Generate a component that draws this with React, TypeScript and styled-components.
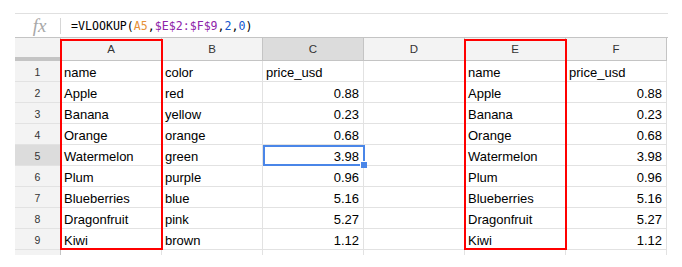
import React from 'react';
import styled, { createGlobalStyle } from 'styled-components';

const Global = createGlobalStyle`
  html, body { margin: 0; padding: 0; background: #fff; }
  body { font-family: "Liberation Sans", Arial, sans-serif; }
`;

const Page = styled.div`
  padding: 13px 0 0 15px;
  width: 653px;
`;

const FormulaBar = styled.div`
  display: flex;
  align-items: center;
  height: 23px;
  border-top: 1px solid #e0e0e0;
`;

const FxBox = styled.div`
  width: 46px;
  height: 16px;
  display: flex;
  align-items: center;
  justify-content: center;
  border-right: 1px solid #d6d6d6;
  font-family: "Liberation Serif", "Times New Roman", serif;
  font-style: italic;
  font-size: 19px;
  color: #a8a8a8;
  line-height: 16px;
  padding-left: 4px;
  box-sizing: border-box;
`;

const Formula = styled.div`
  padding-left: 10px;
  font-family: "DejaVu Sans Mono", "Liberation Mono", monospace;
  font-size: 11.6px;
  color: #000;
  white-space: pre;
`;

const Ref = styled.span<{ $c: string }>`
  color: ${(p) => p.$c};
`;

const Grid = styled.div`
  display: grid;
  grid-template-columns: 46px repeat(6, 101px);
  grid-template-rows: 23px repeat(9, 21px) 5px;
  border-top: 1px solid #c4c4c4;
`;

type Pos = { $r: number; $c: number };

const Corner = styled.div`
  grid-column: 1;
  grid-row: 1;
  background: #f3f3f3;
  border-right: 1px solid #c4c4c4;
  border-bottom: 4px solid #c4c4c4;
`;

const ColHead = styled.div<{ $c: number; $active?: boolean }>`
  grid-row: 1;
  grid-column: ${(p) => p.$c};
  display: flex;
  align-items: center;
  justify-content: center;
  background: ${(p) => (p.$active ? '#dcdcdc' : '#f3f3f3')};
  border-right: 1px solid #c4c4c4;
  border-bottom: 1px solid #c4c4c4;
  font-size: 11.5px;
  color: #333;
`;

const RowHead = styled.div<{ $r: number; $active?: boolean; $last?: boolean }>`
  grid-column: 1;
  grid-row: ${(p) => p.$r};
  display: flex;
  align-items: center;
  justify-content: center;
  background: ${(p) => (p.$active ? '#dcdcdc' : '#f3f3f3')};
  border-right: 1px solid #c4c4c4;
  border-bottom: ${(p) => (p.$last ? 'none' : '1px solid #e2e2e2')};
  font-size: 10.5px;
  color: #333;
  padding-top: 1px;
`;

const Cell = styled.div<Pos & { $num?: boolean; $last?: boolean }>`
  grid-row: ${(p) => p.$r};
  grid-column: ${(p) => p.$c};
  border-right: 1px solid #e2e2e2;
  border-bottom: ${(p) => (p.$last ? 'none' : '1px solid #e2e2e2')};
  padding: 3px 4px 0 3px;
  font-size: 13px;
  line-height: 17px;
  color: #000;
  text-align: ${(p) => (p.$num ? 'right' : 'left')};
  white-space: nowrap;
  overflow: hidden;
`;

const Outline = styled.div<{ $c: number }>`
  grid-column: ${(p) => p.$c};
  grid-row: 1 / 11;
  margin: 1px -1px 0 -1px;
  border: 2px solid #ff0000;
  pointer-events: none;
  z-index: 2;
`;

const Selection = styled.div`
  grid-column: 4;
  grid-row: 6;
  margin: 0 -1px 0 0;
  border: 2px solid #4a86e8;
  position: relative;
  pointer-events: none;
  z-index: 3;
`;

const Handle = styled.div`
  position: absolute;
  right: -4px;
  bottom: -4px;
  width: 6px;
  height: 6px;
  background: #4a86e8;
  border: 1px solid #fff;
  border-right: none;
  border-bottom: none;
`;

const cols = ['A', 'B', 'C', 'D', 'E', 'F'];

// cells per row: A, B, C, D, E, F ; numeric columns are C and F
const data: string[][] = [
  ['name', 'color', 'price_usd', '', 'name', 'price_usd'],
  ['Apple', 'red', '0.88', '', 'Apple', '0.88'],
  ['Banana', 'yellow', '0.23', '', 'Banana', '0.23'],
  ['Orange', 'orange', '0.68', '', 'Orange', '0.68'],
  ['Watermelon', 'green', '3.98', '', 'Watermelon', '3.98'],
  ['Plum', 'purple', '0.96', '', 'Plum', '0.96'],
  ['Blueberries', 'blue', '5.16', '', 'Blueberries', '5.16'],
  ['Dragonfruit', 'pink', '5.27', '', 'Dragonfruit', '5.27'],
  ['Kiwi', 'brown', '1.12', '', 'Kiwi', '1.12'],
];

export default function App() {
  return (
    <>
      <Global />
      <Page>
        <FormulaBar>
          <FxBox>fx</FxBox>
          <Formula>
            =VLOOKUP(<Ref $c="#e69138">A5</Ref>,<Ref $c="#8e24aa">$E$2:$F$9</Ref>,<Ref $c="#1155cc">2</Ref>,<Ref $c="#1155cc">0</Ref>)
          </Formula>
        </FormulaBar>
        <Grid>
          <Corner />
          {cols.map((c, j) => (
            <ColHead key={c} $c={j + 2} $active={c === 'C'}>
              {c}
            </ColHead>
          ))}

          {data.map((row, i) => (
            <React.Fragment key={i}>
              <RowHead $r={i + 2} $active={i === 4}>
                {i + 1}
              </RowHead>
              {row.map((v, j) => (
                <Cell
                  key={j}
                  $r={i + 2}
                  $c={j + 2}
                  $num={i > 0 && (j === 2 || j === 5)}
                >
                  {v}
                </Cell>
              ))}
            </React.Fragment>
          ))}

          <RowHead $r={11} $last />
          {cols.map((c, j) => (
            <Cell key={c} $r={11} $c={j + 2} $last />
          ))}

          <Outline $c={2} />
          <Outline $c={6} />
          <Selection>
            <Handle />
          </Selection>
        </Grid>
      </Page>
    </>
  );
}
